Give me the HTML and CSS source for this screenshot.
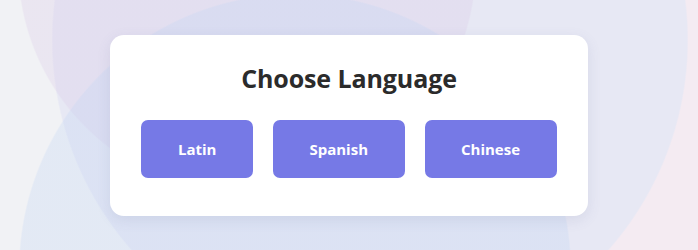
FILE: index.html
```html
<!DOCTYPE html>
<html lang="en">
<head>
<meta charset="utf-8">
<title>Choose Language</title>
<link rel="stylesheet" href="styles.css">
</head>
<body>
  <main class="card">
    <h1 class="title">Choose Language</h1>
    <div class="choices">
      <button class="choice" type="button">Latin</button>
      <button class="choice" type="button">Spanish</button>
      <button class="choice" type="button">Chinese</button>
    </div>
  </main>
</body>
</html>
```

FILE: styles.css
```css
html, body {
  margin: 0;
  padding: 0;
}

body {
  width: 100vw;
  height: 100vh;
  overflow: hidden;
  display: flex;
  align-items: center;
  justify-content: center;
  font-family: "Open Sans", "Noto Sans", Lato, sans-serif;
  background:
    radial-gradient(276px circle at 295px 270px, rgba(194, 213, 243, 0.3) 275px, rgba(194, 213, 243, 0) 276.5px),
    radial-gradient(229px circle at 247px -35px, rgba(218, 202, 231, 0.3) 228px, rgba(218, 202, 231, 0) 229.5px),
    radial-gradient(318px circle at 370px 40px, #e7e8f4 317px, rgba(231, 232, 244, 0) 318.5px),
    linear-gradient(100deg, #f1f2f5 35%, #f4ebf2 85%);
}

.card {
  background: #ffffff;
  border-radius: 14px;
  padding: 28.5px 31px 38px;
  box-shadow: 0 4px 14px rgba(90, 100, 150, 0.12);
  display: flex;
  flex-direction: column;
  align-items: center;
}

.title {
  margin: 0 0 26.5px;
  font-size: 25px;
  line-height: 30px;
  font-weight: 700;
  color: #2b2b2b;
  letter-spacing: -0.1px;
}

.choices {
  display: flex;
  gap: 20px;
}

.choice {
  height: 58px;
  padding: 0 36.5px;
  border: none;
  border-radius: 7px;
  background: #7679e6;
  color: #ffffff;
  font-family: inherit;
  font-size: 15px;
  font-weight: 700;
  cursor: pointer;
}
```
